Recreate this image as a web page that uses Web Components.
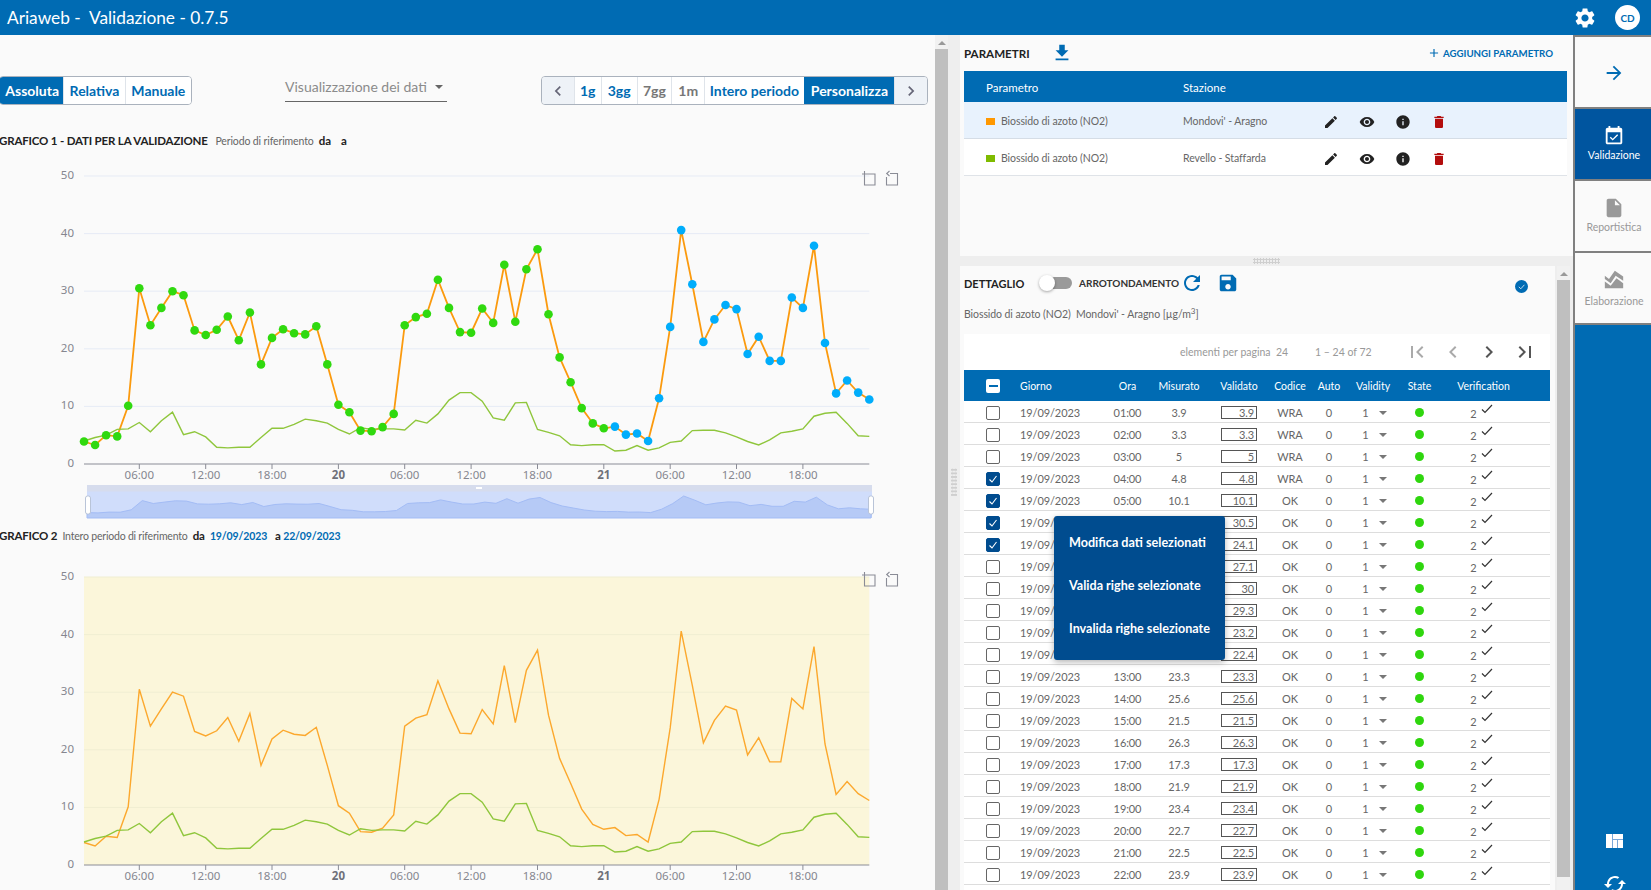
<!DOCTYPE html>
<html lang="it">
<head>
<meta charset="utf-8">
<title>Ariaweb - Validazione</title>
<style>
  html, body { margin: 0; height: 890px; overflow: hidden; background: #eee; }
  body { font-family: Lato, "Open Sans", sans-serif; color: #555; }
</style>
</head>
<body>
<app-shell></app-shell>
<script>
const ICONS = {
  gear: 'M19.14 12.94c.04-.3.06-.61.06-.94 0-.32-.02-.64-.07-.94l2.03-1.58c.18-.14.23-.41.12-.61l-1.92-3.32c-.12-.22-.37-.29-.59-.22l-2.39.96c-.5-.38-1.03-.7-1.62-.94l-.36-2.54c-.04-.24-.24-.41-.48-.41h-3.84c-.24 0-.43.17-.47.41l-.36 2.54c-.59.24-1.13.57-1.62.94l-2.39-.96c-.22-.08-.47 0-.59.22L2.74 8.87c-.12.21-.08.47.12.61l2.03 1.58c-.05.3-.09.63-.09.94s.02.64.07.94l-2.03 1.58c-.18.14-.23.41-.12.61l1.92 3.32c.12.22.37.29.59.22l2.39-.96c.5.38 1.03.7 1.62.94l.36 2.54c.05.24.24.41.48.41h3.84c.24 0 .44-.17.47-.41l.36-2.54c.59-.24 1.13-.56 1.62-.94l2.39.96c.22.08.47 0 .59-.22l1.92-3.32c.12-.22.07-.47-.12-.61l-2.01-1.58zM12 15.6c-1.98 0-3.6-1.62-3.6-3.6s1.62-3.6 3.6-3.6 3.6 1.62 3.6 3.6-1.62 3.6-3.6 3.6z',
  download: 'M19 9h-4V3H9v6H5l7 7 7-7zM5 18v2h14v-2H5z',
  edit: 'M3 17.25V21h3.75L17.81 9.94l-3.75-3.75L3 17.25zM20.71 7.04c.39-.39.39-1.02 0-1.41l-2.34-2.34c-.39-.39-1.02-.39-1.41 0l-1.83 1.83 3.75 3.75 1.83-1.83z',
  eye: 'M12 4.5C7 4.5 2.73 7.61 1 12c1.73 4.39 6 7.5 11 7.5s9.27-3.11 11-7.5c-1.73-4.39-6-7.5-11-7.5zM12 17c-2.76 0-5-2.24-5-5s2.24-5 5-5 5 2.24 5 5-2.24 5-5 5zm0-8c-1.66 0-3 1.34-3 3s1.34 3 3 3 3-1.34 3-3-1.34-3-3-3z',
  info: 'M12 2C6.48 2 2 6.48 2 12s4.48 10 10 10 10-4.48 10-10S17.52 2 12 2zm1 15h-2v-6h2v6zm0-8h-2V7h2v2z',
  trash: 'M6 19c0 1.1.9 2 2 2h8c1.1 0 2-.9 2-2V7H6v12zM19 4h-3.5l-1-1h-5l-1 1H5v2h14V4z',
  add: 'M19 13h-6v6h-2v-6H5v-2h6V5h2v6h6v2z',
  arrow: 'M12 4l-1.41 1.41L16.17 11H4v2h12.17l-5.58 5.59L12 20l8-8z',
  calendar: 'M16.53 11.06L15.47 10l-4.88 4.88-2.12-2.12-1.06 1.06L10.59 17l5.94-5.94zM19 3h-1V1h-2v2H8V1H6v2H5c-1.11 0-1.99.9-1.99 2L3 19c0 1.1.89 2 2 2h14c1.1 0 2-.9 2-2V5c0-1.1-.9-2-2-2zm0 16H5V8h14v11z',
  file: 'M6 2c-1.1 0-1.99.9-1.99 2L4 20c0 1.1.89 2 1.99 2H18c1.1 0 2-.9 2-2V8l-6-6H6zm7 7V3.5L18.5 9H13z',
  peaks: 'M1 8l5 4 7-10 10 7v5L14 8l-6 9-7-5zM1 15l7 5 7-9 8 6v6H1z',
  refresh: 'M17.65 6.35C16.2 4.9 14.21 4 12 4c-4.42 0-7.99 3.58-7.99 8s3.57 8 7.99 8c3.73 0 6.84-2.55 7.73-6h-2.08c-.82 2.33-3.04 4-5.65 4-3.31 0-6-2.69-6-6s2.69-6 6-6c1.66 0 3.14.69 4.22 1.78L13 11h7V4l-2.35 2.35z',
  save: 'M17 3H5c-1.11 0-2 .9-2 2v14c0 1.1.89 2 2 2h14c1.1 0 2-.9 2-2V7l-4-4zm-5 16c-1.66 0-3-1.34-3-3s1.34-3 3-3 3 1.34 3 3-1.34 3-3 3zm3-10H5V5h10v4z',
  first: 'M18.41 16.59L13.82 12l4.59-4.59L17 6l-6 6 6 6zM6 6h2v12H6z',
  prev: 'M15.41 7.41L14 6l-6 6 6 6 1.41-1.41L10.83 12z',
  next: 'M10 6L8.59 7.41 13.17 12l-4.58 4.59L10 18l6-6z',
  last: 'M5.59 7.41L10.18 12l-4.59 4.59L7 18l6-6-6-6zM16 6h2v12h-2z',
  sync: 'M12 4V1L8 5l4 4V6c3.31 0 6 2.69 6 6 0 1.01-.25 1.97-.7 2.8l1.46 1.46C19.54 15.03 20 13.57 20 12c0-4.42-3.58-8-8-8zm0 14c-3.31 0-6-2.69-6-6 0-1.01.25-1.97.7-2.8L5.24 7.74C4.46 8.97 4 10.43 4 12c0 4.42 3.58 8 8 8v3l4-4-4-4v3z'
};

const ORANGE = [3.9,3.3,5,4.8,10.1,30.5,24.1,27.1,30,29.3,23.2,22.4,23.3,25.6,21.5,26.3,17.3,21.9,23.4,22.7,22.5,23.9,17.3,10.3,9,5.8,5.7,6.4,8.7,24.1,25.5,26.1,32,27.1,22.9,22.8,27,24.5,34.6,24.7,33.8,37.3,26,18.5,14.2,9.7,7.05,6.2,6.5,5.1,5.3,4,11.4,23.8,40.6,31.2,21.2,25.1,27.6,26.9,19.1,22.1,17.9,17.9,28.9,27.1,37.9,21,12.25,14.5,12.4,11.2];
const GREEN = [4,4.6,5,6,6.1,7.2,5.6,7.5,9,5.1,5.6,4.7,2.9,2.8,2.9,2.9,4.6,6.2,6.2,6.9,7.8,7.5,7.1,6,5.2,6.3,6,6.1,6.1,5.9,7.6,7.1,8.7,11.1,12.4,12.4,10.9,8,7.6,10.6,10.7,6,5.5,4.9,3.35,3.2,3.35,3.35,2.25,2.4,3.2,2.4,2.8,3.75,4,5.8,5.85,5.85,5.4,4.7,3.9,3.3,4.2,5.4,5.7,6.1,8.3,8.8,9,7.05,4.9,4.8];

class UiIcon extends HTMLElement {
  connectedCallback() {
    const size = this.getAttribute('size') || 16;
    const name = this.getAttribute('name');
    this.attachShadow({ mode: 'open' });
    this.shadowRoot.innerHTML = `
    <style>
      :host { display: inline-flex; width: ${size}px; height: ${size}px; flex: none; color: ${this.getAttribute('color') || 'currentColor'}; }
      svg { width: 100%; height: 100%; display: block; fill: currentColor; }
    </style>
    <svg viewBox="0 0 24 24"><path d="${ICONS[name]}"/></svg>`;
  }
}
customElements.define('ui-icon', UiIcon);

class AppHeader extends HTMLElement {
  connectedCallback() {
    this.attachShadow({ mode: 'open' });
    this.shadowRoot.innerHTML = `
    <style>
      :host { display: flex; align-items: center; height: 35px; background: #006bb3; color: #fff; padding: 0 11px 0 7px; }
      .title { font-size: 17.3px; flex: 1; white-space: pre; }
      .avatar { width: 25px; height: 25px; border-radius: 50%; background: #fff; color: #006bb3; font-size: 10px; font-weight: 700;
        display: flex; align-items: center; justify-content: center; margin-left: 18px; }
    </style>
    <div class="title">Ariaweb -  Validazione - 0.7.5</div>
    <ui-icon name="gear" size="24"></ui-icon>
    <div class="avatar">CD</div>`;
  }
}
customElements.define('app-header', AppHeader);

class SegBtn extends HTMLElement {
  connectedCallback() {
    this.attachShadow({ mode: 'open' });
    this.shadowRoot.innerHTML = `
    <style>
      :host { display: flex; align-items: center; justify-content: center; height: 100%; box-sizing: border-box; font-size: 14px; font-weight: 700;
        color: #006bb3; background: #fff; border-left: 1px solid #dfe4ea; white-space: nowrap; }
      :host([active]) { background: #006bb3; color: #fff; border-left-color: #006bb3; }
      :host([muted]) { color: #777; }
      :host([nav]) { background: #eef2f7; color: #667; }
    </style>
    <slot></slot>`;
  }
}
customElements.define('seg-btn', SegBtn);

class SegGroup extends HTMLElement {
  connectedCallback() {
    this.attachShadow({ mode: 'open' });
    this.shadowRoot.innerHTML = `
    <style>
      :host { display: flex; height: 29px; box-sizing: border-box; border: 1px solid #aab2bd; border-radius: 4px; overflow: hidden; background: #fff; flex: none; }
    </style>
    <slot></slot>`;
  }
}
customElements.define('seg-group', SegGroup);

class LineChart extends HTMLElement {
  connectedCallback() {
    const top = +this.getAttribute('top');
    const height = +this.getAttribute('height');
    const marked = this.hasAttribute('markers');
    const shaded = this.hasAttribute('shaded');
    const X0 = 84, DX = 11.06, PX = 5.76;
    const x = i => +(X0 + i * DX).toFixed(1);
    const y = v => +(top + 288 - v * PX).toFixed(1);
    const pts = d => d.map((v, i) => x(i) + ',' + y(v)).join(' ');
    let g = '';
    if (shaded) g += `<rect x="${X0}" y="${top}" width="785.3" height="288" fill="#fbf6da"/>`;
    [0, 10, 20, 30, 40, 50].forEach(v => {
      if (v) g += `<line x1="${X0}" x2="869.3" y1="${y(v)}" y2="${y(v)}" stroke="${shaded ? '#f0eed2' : '#e6ebf5'}"/>`;
      g += `<text x="74" y="${y(v) + 3}" text-anchor="end" class="lbl">${v}</text>`;
    });
    g += `<line x1="${X0}" x2="869.3" y1="${top + 288}" y2="${top + 288}" stroke="#8a8c96"/>`;
    const ticks = [[5,'06:00'],[11,'12:00'],[17,'18:00'],[23,'20',1],[29,'06:00'],[35,'12:00'],[41,'18:00'],[47,'21',1],[53,'06:00'],[59,'12:00'],[65,'18:00']];
    ticks.forEach(t => {
      g += `<line x1="${x(t[0])}" x2="${x(t[0])}" y1="${top + 288}" y2="${top + 293}" stroke="#8a8c96"/>`;
      g += `<text x="${x(t[0])}" y="${top + 303}" text-anchor="middle" class="lbl${t[2] ? ' bold' : ''}">${t[1]}</text>`;
    });
    g += `<polyline points="${pts(ORANGE)}" fill="none" stroke="#fb9a0e" stroke-width="${marked ? 1.8 : 1.4}"${marked ? '' : ' opacity=".85"'}/>`;
    g += `<polyline points="${pts(GREEN)}" fill="none" stroke="#8fc63c" stroke-width="1.4"/>`;
    if (marked) {
      ORANGE.forEach((v, i) => {
        g += `<circle cx="${x(i)}" cy="${y(v)}" r="4.3" fill="${i < 48 ? '#30d90f' : '#00adfb'}"/>`;
      });
    }
    // crop and restore glyphs of the chart toolbox
    const ty = top - 5;
    g += `<g fill="none" stroke="#8a8c96" stroke-width="1.1">
      <path d="M864.5 ${ty}V${ty + 14}H875V${ty + 3}H862"/>
      <path d="M890 ${ty + 2.5}H897.5V${ty + 14}H886.5V${ty + 6}M889.5 ${ty}l-2.8 2.5 2.8 2.5"/>
    </g>`;
    if (marked) {
      const by = top + 309, bh = 33;
      const mini = ORANGE.map((v, i) => (87 + i * 11.05).toFixed(1) + ',' + (by + 29.4 - v * 0.454).toFixed(1)).join(' ');
      g += `<rect x="87" y="${by}" width="785" height="${bh}" fill="#d0ddfb"/>
        <rect x="87" y="${by}" width="785" height="6.5" fill="#d6dced"/>
        <polygon points="87,${by + bh} ${mini} 871,${by + bh}" fill="#b6caf6" stroke="#a3bcf5" stroke-width="1"/>
        <rect x="476" y="${by + 2}" width="6" height="2" fill="#fff"/>
        <rect x="85.5" y="${by + 11}" width="5" height="18" rx="2" fill="#fff" stroke="#b9c4d8"/>
        <rect x="868.5" y="${by + 11}" width="5" height="18" rx="2" fill="#fff" stroke="#b9c4d8"/>`;
    }
    this.attachShadow({ mode: 'open' });
    this.shadowRoot.innerHTML = `
    <style>
      :host { display: block; height: ${height}px; }
      svg { display: block; }
      .lbl { font: 11.5px "Noto Sans", sans-serif; fill: #85868f; }
      .bold { font-weight: 700; fill: #6e7079; }
    </style>
    <svg width="935" height="${height}" viewBox="0 0 935 ${height}">${g}</svg>`;
  }
}
customElements.define('line-chart', LineChart);

class ChartsPanel extends HTMLElement {
  connectedCallback() {
    this.attachShadow({ mode: 'open' });
    this.shadowRoot.innerHTML = `
    <style>
      :host { display: block; width: 935px; flex: none; background: #fafafa; overflow: hidden; }
      .bar { display: flex; padding-top: 41px; margin-left: -1px; }
      .drop { width: 162px; height: 26px; margin: 0 94px 0 93px; padding-bottom: 4px; box-sizing: border-box; border-bottom: 1px solid #666; color: #8b8b8b; font-size: 14px;
        display: flex; align-items: center; gap: 8px; white-space: nowrap; }
      .drop i { width: 0; height: 0; border: 4px solid transparent; border-top-color: #666; border-bottom: 0; }
      .head { font-size: 10.5px; letter-spacing: -.12px; color: #666; height: 14px; line-height: 14px; margin-left: -1px; white-space: pre; }
      .head b { color: #222; font-size: 11.5px; letter-spacing: -.17px; }
      .head em { color: #006bb3; font-style: normal; font-weight: 700; }
      .h1 { margin-top: 29px; margin-bottom: 12px; }
      .h2 { margin-top: 4px; margin-bottom: 12px; }
      .tight { letter-spacing: -.2px; }
    </style>
    <div class="bar">
      <seg-group style="width:193px">
        <seg-btn active style="width:64px">Assoluta</seg-btn>
        <seg-btn style="width:62px">Relativa</seg-btn>
        <seg-btn style="width:67px">Manuale</seg-btn>
      </seg-group>
      <div class="drop">Visualizzazione dei dati <i></i></div>
      <seg-group style="width:387px">
        <seg-btn nav style="width:32px;border-left:0"><ui-icon name="prev" size="20"></ui-icon></seg-btn>
        <seg-btn style="width:27px">1g</seg-btn>
        <seg-btn style="width:36px">3gg</seg-btn>
        <seg-btn muted style="width:35px">7gg</seg-btn>
        <seg-btn muted style="width:33px">1m</seg-btn>
        <seg-btn style="width:100px">Intero periodo</seg-btn>
        <seg-btn active style="width:91px">Personalizza</seg-btn>
        <seg-btn nav style="width:33px"><ui-icon name="next" size="20"></ui-icon></seg-btn>
      </seg-group>
    </div>
    <div class="head h1"><b>GRAFICO 1 - DATI PER LA VALIDAZIONE</b>   Periodo di riferimento  <b>da</b>    <b>a</b></div>
    <line-chart markers top="16" height="365"></line-chart>
    <div class="head h2"><b>GRAFICO 2</b>  <span class="tight">Intero periodo di riferimento</span>  <b>da</b>  <em>19/09/2023</em>   <b>a</b> <em>22/09/2023</em></div>
    <line-chart shaded top="22" height="340"></line-chart>`;
  }
}
customElements.define('charts-panel', ChartsPanel);

class ScrollRail extends HTMLElement {
  connectedCallback() {
    this.attachShadow({ mode: 'open' });
    const end = this.getAttribute('end') || 0;
    this.shadowRoot.innerHTML = `
    <style>
      :host { display: flex; flex-direction: column; align-items: center; width: 13px; flex: none; background: #f1f1f1; padding-bottom: ${end}px; box-sizing: border-box; }
      i { width: 0; height: 0; border: 4px solid transparent; border-bottom: 4px solid #999; border-top: 0; margin: 6px 0 4px; flex: none; }
      b { display: block; width: 100%; flex: 1; background: #bfbfbf; }
    </style>
    <i></i><b></b>`;
  }
}
customElements.define('scroll-rail', ScrollRail);

class ParamRow extends HTMLElement {
  connectedCallback() {
    this.attachShadow({ mode: 'open' });
    this.shadowRoot.innerHTML = `
    <style>
      :host { display: grid; grid-template-columns: 197px 140px repeat(4, 36px); align-items: center; height: 37px; box-sizing: border-box; padding: 2px 0 0 22px;
        font-size: 10.5px; letter-spacing: -.08px; color: #666; background: #fff; border-bottom: 1px solid #dfe3e8; }
      :host([selected]) { background: #e8f2fd; border-bottom-color: #d5dde6; }
      .name { display: flex; align-items: center; gap: 6px; white-space: nowrap; }
      .name i { width: 9px; height: 7px; background: ${this.getAttribute('swatch')}; }
      ui-icon { margin-top: 1px; }
    </style>
    <div class="name"><i></i>${this.getAttribute('param')}</div>
    <div>${this.getAttribute('station')}</div>
    <ui-icon name="edit" size="16" color="#222"></ui-icon>
    <ui-icon name="eye" size="16" color="#222"></ui-icon>
    <ui-icon name="info" size="16" color="#222"></ui-icon>
    <ui-icon name="trash" size="16" color="#b30d0d"></ui-icon>`;
  }
}
customElements.define('param-row', ParamRow);

class ParamsPanel extends HTMLElement {
  connectedCallback() {
    this.attachShadow({ mode: 'open' });
    this.shadowRoot.innerHTML = `
    <style>
      :host { display: block; height: 221px; box-sizing: border-box; background: #fafafa; padding: 0 6px 0 4px; flex: none; }
      .top { display: flex; align-items: center; height: 36px; padding: 0 14px 0 0; }
      .top b { font-size: 11.6px; color: #222; width: 87px; }
      .add { margin-left: auto; display: flex; align-items: center; gap: 2px; color: #006bb3; font-size: 9.7px; font-weight: 700; }
      .hd { display: grid; grid-template-columns: 197px 1fr; align-items: center; height: 31px; box-sizing: border-box; padding: 1px 0 0 22px; background: #006bb3; color: #fff; font-size: 11.5px; }
    </style>
    <div class="top"><b>PARAMETRI</b><ui-icon name="download" size="22" color="#006bb3"></ui-icon>
      <div class="add"><ui-icon name="add" size="14"></ui-icon>AGGIUNGI PARAMETRO</div></div>
    <div class="hd"><div>Parametro</div><div>Stazione</div></div>
    <param-row selected swatch="#ff9800" param="Biossido di azoto (NO2)" station="Mondovi' - Aragno"></param-row>
    <param-row swatch="#7fbb00" param="Biossido di azoto (NO2)" station="Revello - Staffarda"></param-row>`;
  }
}
customElements.define('params-panel', ParamsPanel);

const CHECK_COLS = '56px 85px 45px 58px 62px 40px 38px 50px 43px 85px 24px';

class DataRow extends HTMLElement {
  connectedCallback() {
    const a = n => this.getAttribute(n);
    this.attachShadow({ mode: 'open' });
    this.shadowRoot.innerHTML = `
    <style>
      :host { display: grid; grid-template-columns: ${CHECK_COLS}; height: 22px; box-sizing: border-box; padding-top: 2px; border-bottom: 1px solid #ddd; align-items: center;
        font-size: 11px; letter-spacing: -.1px; color: #666; text-align: center; background: #fff; }
      .box { width: 14px; height: 14px; box-sizing: border-box; margin: 1px 0 0 22px; border: 1px solid #666; border-radius: 2px; background: #fff; }
      :host([checked]) .box { background: #004c8f; border-color: #004c8f; }
      .box svg { display: block; width: 12px; height: 12px; }
      .day { text-align: left; }
      .val { width: 36px; height: 13px; box-sizing: border-box; border: 1px solid #555; margin: -1px auto 0; text-align: right; line-height: 11px; padding-right: 2px; }
      .vy { display: flex; align-items: center; justify-content: center; gap: 10px; padding-left: 3px; }
      .vy i { width: 0; height: 0; border: 4px solid transparent; border-top-color: #777; border-bottom: 0; }
      .st { width: 9px; height: 9px; border-radius: 50%; background: #2fd60e; margin: -1px auto 0; }
      .vf { display: flex; justify-content: center; gap: 4px; line-height: 14px; padding: 2px 4px 0 0; }
      .vf svg { width: 12px; height: 10px; margin-top: -3px; }
    </style>
    <div class="box">${this.hasAttribute('checked') ? '<svg viewBox="0 0 12 12"><path d="M2.5 6.5l2.5 2.5 4.5-6" fill="none" stroke="#fff" stroke-width="1.1"/></svg>' : ''}</div>
    <div class="day">19/09/2023</div>
    <div>${a('hour')}</div>
    <div>${a('value')}</div>
    <div class="val">${a('value')}</div>
    <div>${a('code')}</div>
    <div>0</div>
    <div class="vy">1<i></i></div>
    <div><div class="st"></div></div>
    <div class="vf">2<svg viewBox="0 0 12 10"><path d="M1 5.5l3 3L11 1" fill="none" stroke="#333" stroke-width="1.2"/></svg></div>`;
  }
}
customElements.define('data-row', DataRow);

class ActionMenu extends HTMLElement {
  connectedCallback() {
    this.attachShadow({ mode: 'open' });
    this.shadowRoot.innerHTML = `
    <style>
      :host { position: absolute; left: 90px; top: 182px; width: 171px; height: 144px; box-sizing: border-box; background: #004c8f; border-radius: 3px; color: #fff;
        display: block; padding: 5px 0 0 15px; font-size: 12.6px; font-weight: 700; box-shadow: 0 2px 6px rgba(0,0,0,.3); }
      div { height: 43px; line-height: 43px; white-space: nowrap; }
    </style>
    <div>Modifica dati selezionati</div>
    <div>Valida righe selezionate</div>
    <div>Invalida righe selezionate</div>`;
  }
}
customElements.define('action-menu', ActionMenu);

class DetailTable extends HTMLElement {
  connectedCallback() {
    const rows = ORANGE.slice(0, 22).map((v, i) => {
      const h = String(i + 1).padStart(2, '0') + ':00';
      const checked = i >= 3 && i <= 6 ? 'checked' : '';
      return `<data-row ${checked} hour="${h}" value="${v}" code="${i < 4 ? 'WRA' : 'OK'}"></data-row>`;
    }).join('');
    this.attachShadow({ mode: 'open' });
    this.shadowRoot.innerHTML = `
    <style>
      :host { display: block; position: relative; background: #fff; margin: 0 5px 0 4px; padding-bottom: 20px; }
      .pg { display: flex; align-items: center; height: 36px; padding-left: 216px; font-size: 10.5px; color: #999; }
      .pg span { flex: none; }
      .pg span:first-child { width: 135px; white-space: pre; }
      .pg span:nth-child(2) { width: 90px; }
      .pg ui-icon { margin-right: 12px; }
      .hd { display: grid; grid-template-columns: ${CHECK_COLS}; height: 31px; align-items: center; background: #006bb3; color: #fff; font-size: 10.5px; text-align: center; white-space: nowrap; }
      .hd .mn { width: 14px; height: 14px; margin-left: 22px; background: #fff; border-radius: 2px; display: flex; align-items: center; justify-content: center; }
      .hd .mn i { width: 9px; height: 2px; background: #006bb3; }
      .hd .day { text-align: left; }
    </style>
    <div class="pg"><span>elementi per pagina  24</span><span>1 – 24 of 72</span>
      <ui-icon name="first" size="24" color="#aaa"></ui-icon><ui-icon name="prev" size="24" color="#aaa"></ui-icon>
      <ui-icon name="next" size="24" color="#555"></ui-icon><ui-icon name="last" size="24" color="#555"></ui-icon></div>
    <div class="hd"><div><div class="mn"><i></i></div></div><div class="day">Giorno</div><div>Ora</div><div>Misurato</div><div>Validato</div><div>Codice</div><div>Auto</div><div>Validity</div><div>State</div><div>Verification</div></div>
    ${rows}
    <action-menu></action-menu>`;
  }
}
customElements.define('detail-table', DetailTable);

class DetailPanel extends HTMLElement {
  connectedCallback() {
    this.attachShadow({ mode: 'open' });
    this.shadowRoot.innerHTML = `
    <style>
      :host { display: block; flex: 1; min-width: 0; background: #fafafa; overflow: hidden; }
      .top { display: flex; align-items: center; height: 34px; padding-left: 4px; }
      .top b { font-size: 11px; color: #222; width: 75px; flex: none; }
      .tg { position: relative; width: 33px; height: 16px; margin-right: 7px; flex: none; display: flex; align-items: center; justify-content: flex-end; }
      .tg u { display: block; width: 29px; height: 12px; border-radius: 6px; background: #9a9a9a; }
      .tg s { position: absolute; left: 0; top: 0; width: 16px; height: 16px; border-radius: 50%; background: #fff; box-shadow: 0 1px 3px rgba(0,0,0,.35); }
      .rd { font-size: 10px; font-weight: 700; color: #333; width: 101px; flex: none; white-space: nowrap; }
      .ck { margin-left: 276px; margin-top: 7px; width: 13px; height: 13px; flex: none; }
      .sub { height: 34px; padding-left: 4px; font-size: 10.5px; letter-spacing: -.08px; color: #666; line-height: 28px; white-space: pre; }
      .sub sup { font-size: 8px; line-height: 0; }
    </style>
    <div class="top"><b>DETTAGLIO</b>
      <div class="tg"><u></u><s></s></div>
      <div class="rd">ARROTONDAMENTO</div>
      <ui-icon name="refresh" size="24" color="#006bb3"></ui-icon>
      <ui-icon name="save" size="22" color="#006bb3" style="margin-left:13px"></ui-icon>
      <svg class="ck" viewBox="0 0 13 13"><circle cx="6.5" cy="6.5" r="6.5" fill="#006bb3"/><path d="M3.8 6.8l2 2 3.6-4" fill="none" stroke="#cfe4f5" stroke-width=".9"/></svg>
    </div>
    <div class="sub">Biossido di azoto (NO2)  Mondovi' - Aragno [µg/m<sup>3</sup>]</div>
    <detail-table></detail-table>`;
  }
}
customElements.define('detail-panel', DetailPanel);

class NavItem extends HTMLElement {
  connectedCallback() {
    this.attachShadow({ mode: 'open' });
    this.shadowRoot.innerHTML = `
    <style>
      :host { display: flex; flex-direction: column; align-items: center; justify-content: center; gap: 2px; height: 72px; box-sizing: border-box; padding: 0 0 3px 2px;
        border-top: 2px solid #808080; background: #fafafa; color: #999; font-size: 10.5px; }
      :host([active]) { background: #00559f; color: #fff; }
      :host([plain]) { color: #006bb3; padding: 2px 0 0 2px; }
    </style>
    <ui-icon name="${this.getAttribute('icon')}" size="${this.getAttribute('size') || 22}"></ui-icon>
    <slot></slot>`;
  }
}
customElements.define('nav-item', NavItem);

class SideNav extends HTMLElement {
  connectedCallback() {
    this.attachShadow({ mode: 'open' });
    this.shadowRoot.innerHTML = `
    <style>
      :host { display: flex; flex-direction: column; width: 78px; flex: none; background: #006bb3; border-left: 2px solid #808080; box-sizing: border-box; color: #fff; }
      .end { border-top: 2px solid #808080; flex: 1; display: flex; flex-direction: column; align-items: center; justify-content: flex-end; padding-left: 3px; overflow: hidden; }
      .grid { width: 17px; height: 14px; margin-bottom: 24px; flex: none; }
      .sync { margin-bottom: -6px; transform: rotate(90deg); }
    </style>
    <nav-item plain icon="arrow"></nav-item>
    <nav-item active icon="calendar">Validazione</nav-item>
    <nav-item icon="file">Reportistica</nav-item>
    <nav-item icon="peaks" size="20" style="gap:6px;padding-bottom:1px">Elaborazione</nav-item>
    <div class="end">
      <svg class="grid" viewBox="0 0 17 14"><rect width="17" height="14" fill="#fff"/><path d="M6.5 0v14M6.5 5.5h10.5M11.5 5.5V14" stroke="#7aa7d8" fill="none"/></svg>
      <ui-icon class="sync" name="sync" size="24"></ui-icon>
    </div>`;
  }
}
customElements.define('side-nav', SideNav);

class AppShell extends HTMLElement {
  connectedCallback() {
    this.attachShadow({ mode: 'open' });
    this.shadowRoot.innerHTML = `
    <style>
      :host { display: flex; flex-direction: column; height: 890px; overflow: hidden; font-family: Lato, "Open Sans", sans-serif; }
      .main { display: flex; flex: 1; min-height: 0; }
      .vgrip { width: 12px; flex: none; box-sizing: border-box; display: flex; align-items: center; justify-content: center; background: #eee; padding-top: 38px; }
      .vgrip i { width: 6px; height: 28px; background: radial-gradient(circle, #cfcfcf 1.2px, transparent 1.4px) 0 0 / 3px 3.6px; }
      .right { flex: 1; min-width: 0; display: flex; flex-direction: column; }
      .hgrip { height: 10px; flex: none; display: flex; align-items: center; justify-content: center; background: #eee; }
      .hgrip i { width: 27px; height: 6px; background: radial-gradient(circle, #cfcfcf 1px, transparent 1.2px) 0 0 / 3px 3px; }
      .bottom { flex: 1; min-height: 0; display: flex; background: #eee; padding-right: 3px; }
      .bottom scroll-rail { margin-left: 2px; }
    </style>
    <app-header></app-header>
    <div class="main">
      <charts-panel></charts-panel>
      <scroll-rail></scroll-rail>
      <div class="vgrip"><i></i></div>
      <div class="right">
        <params-panel></params-panel>
        <div class="hgrip"><i></i></div>
        <div class="bottom"><detail-panel></detail-panel><scroll-rail end="13"></scroll-rail></div>
      </div>
      <side-nav></side-nav>
    </div>`;
  }
}
customElements.define('app-shell', AppShell);
</script>
</body>
</html>
